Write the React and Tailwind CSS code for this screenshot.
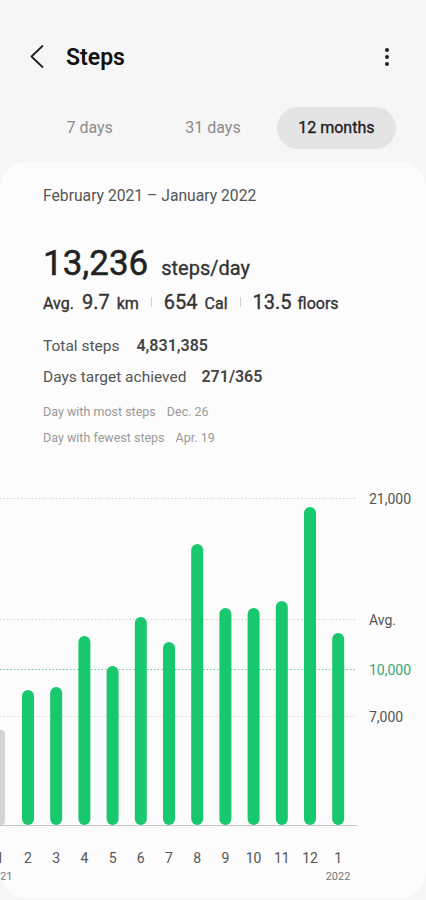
import React from "react"

const tabs = ["7 days", "31 days", "12 months"]

// bar tops in page px, bottom of every bar is 825
const months = [
    { label: "2", top: 690 },
    { label: "3", top: 687 },
    { label: "4", top: 636 },
    { label: "5", top: 666 },
    { label: "6", top: 617 },
    { label: "7", top: 642 },
    { label: "8", top: 544 },
    { label: "9", top: 608 },
    { label: "10", top: 608 },
    { label: "11", top: 601 },
    { label: "12", top: 507 },
    { label: "1", top: 633 },
]

const grid = [
    { y: 498.5, label: "21,000", line: "#cfcfcf", text: "#555555" },
    { y: 619.5, label: "Avg.", line: "#cfcfcf", text: "#555555" },
    { y: 669.5, label: "10,000", line: "#6cc79c", text: "#3aa777" },
    { y: 716.5, label: "7,000", line: "#d6d6d6", text: "#555555" },
]

function Chart() {
    return (
        <svg width="426" height="418" viewBox="0 481 426 418" className="block">
            {grid.map(g => (
                <g key={g.label}>
                    <line x1="0" x2="357" y1={g.y} y2={g.y} stroke={g.line} strokeWidth="1" strokeDasharray="1.5 2" />
                    <text x="369" y={g.y + 5} fontSize="14" fill={g.text}>{g.label}</text>
                </g>
            ))}
            <rect x="-7" y="730" width="12" height="95" rx="4" fill="#d5d5d5" />
            <text x="0" y="863" fontSize="14" fill="#555" textAnchor="middle">1</text>
            <text x="0" y="880" fontSize="11" fill="#777" textAnchor="middle">2021</text>
            {months.map((m, i) => {
                const cx = 28 + i * 28.2
                return (
                    <g key={i}>
                        <rect x={cx - 6} y={m.top} width="12" height={825 - m.top} rx="6" fill="#17c96c" />
                        <text x={cx} y="863" fontSize="14" fill="#555" textAnchor="middle">{m.label}</text>
                    </g>
                )
            })}
            <text x="338" y="880" fontSize="11" fill="#777" textAnchor="middle">2022</text>
            <line x1="0" x2="357" y1="825.5" y2="825.5" stroke="#c4c4c4" strokeWidth="1" />
        </svg>
    )
}

export default function App() {
    return (
        <div className="min-h-[900px] bg-[#f6f6f6] font-['Roboto',sans-serif] overflow-hidden">
            {/* Header */}
            <div className="h-[56px] mt-[29px] flex items-center justify-between px-[28px]">
                <div className="flex items-center">
                    <svg width="16" height="24" viewBox="0 0 16 24" className="ml-[1px]">
                        <polyline points="13.5,1 2.5,11.5 13.5,22" fill="none" stroke="#222" strokeWidth="1.8" strokeLinecap="round" strokeLinejoin="round" />
                    </svg>
                    <span className="ml-[21px] text-[23px] font-semibold text-[#111] leading-none">Steps</span>
                </div>
                <svg width="6" height="20" viewBox="0 0 6 20" className="mr-[8px]">
                    <circle cx="3" cy="3" r="2" fill="#222" />
                    <circle cx="3" cy="10" r="2" fill="#222" />
                    <circle cx="3" cy="17" r="2" fill="#222" />
                </svg>
            </div>

            {/* Tabs */}
            <div className="mt-[22px] px-[28px] grid grid-cols-3">
                {tabs.map((t, i) => (
                    <div key={t} className="flex justify-center">
                        <div className={`w-[119px] h-[42px] rounded-full flex items-center justify-center text-[16px] ${i === 2 ? "bg-[#e4e4e4] text-[#222] [-webkit-text-stroke:0.35px_#222]" : "text-[#8c8c8c]"}`}>
                            {t}
                        </div>
                    </div>
                ))}
            </div>

            {/* Card */}
            <div className="mt-[13px] h-[736px] rounded-[26px] bg-[#fcfcfc] overflow-hidden">
                <div className="pl-[43px]">
                    <p className="pt-[24px] text-[15.7px] leading-[20px] text-[#555]">February 2021 – January 2022</p>

                    <div className="mt-[40px] flex items-baseline leading-none">
                        <span className="text-[35px] text-[#222] [-webkit-text-stroke:0.5px_#222]">13,236</span>
                        <span className="ml-[13px] text-[20px] text-[#333] [-webkit-text-stroke:0.3px_#333]">steps/day</span>
                    </div>

                    <div className="mt-[11px] flex items-baseline leading-none text-[#333] [-webkit-text-stroke:0.35px_#333]">
                        <span className="text-[16px]">Avg.</span>
                        <span className="ml-[8px] text-[20px]">9.7</span>
                        <span className="ml-[7px] text-[16px]">km</span>
                        <span className="mx-[12px] w-px h-[10px] bg-[#d2d2d2] self-center"></span>
                        <span className="text-[20px]">654</span>
                        <span className="ml-[7px] text-[16px]">Cal</span>
                        <span className="mx-[12px] w-px h-[10px] bg-[#d2d2d2] self-center"></span>
                        <span className="text-[20px]">13.5</span>
                        <span className="ml-[6px] text-[16px]">floors</span>
                    </div>

                    <div className="mt-[26px] flex items-baseline leading-none">
                        <span className="text-[15.5px] text-[#555]">Total steps</span>
                        <span className="ml-[17px] text-[16px] font-semibold text-[#444]">4,831,385</span>
                    </div>
                    <div className="mt-[14px] flex items-baseline leading-none">
                        <span className="text-[15.5px] text-[#555]">Days target achieved</span>
                        <span className="ml-[15px] text-[16px] font-semibold text-[#444]">271/365</span>
                    </div>

                    <div className="mt-[21px] flex items-baseline leading-none text-[12.5px] text-[#9a9a9a]">
                        <span>Day with most steps</span>
                        <span className="ml-[11px]">Dec. 26</span>
                    </div>
                    <div className="mt-[13px] flex items-baseline leading-none text-[12.5px] text-[#9a9a9a]">
                        <span>Day with fewest steps</span>
                        <span className="ml-[11px]">Apr. 19</span>
                    </div>
                </div>

                <div className="mt-[37px]">
                    <Chart />
                </div>
            </div>
        </div>
    )
}
